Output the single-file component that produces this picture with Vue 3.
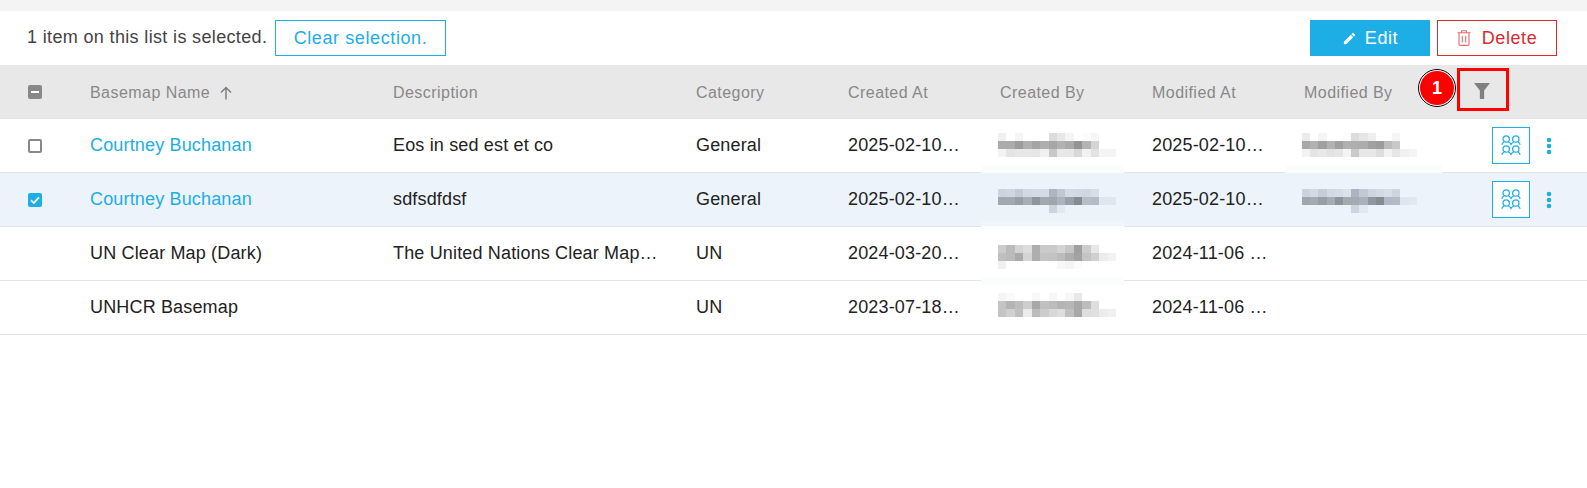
<script setup>
const W = null
const g = (s) => s.split(' ').map((v) => (v === '--' ? W : v.length === 2 ? `#${v}${v}${v}` : `#${v}`))
const cols = ['Description', 'Category', 'Created At', 'Created By', 'Modified At', 'Modified By']

const makeRects = (rows, top, size) =>
  rows.flatMap((row, ri) =>
    g(row).map((fill, ci) => ({
      x: Math.round(-2 + ci * size),
      y: top + ri * 8,
      w: Math.round(-2 + (ci + 1) * size) - Math.round(-2 + ci * size),
      fill,
    })).filter((r) => r.fill),
  )

const rows = [
  {
    name: 'Courtney Buchanan', link: true, desc: 'Eos in sed est et co', cat: 'General',
    created: '2025-02-10…', mod: '2025-02-10…', check: 'off', actions: true,
    by: makeRects([
      'f0 -- f5 -- -- -- dc e8 f5 -- fc f6 -- --',
      'ab ab 9c b0 a4 ae a6 b2 aa 94 b4 d4 -- --',
      'f3 e4 e8 e8 e6 f0 c8 e8 e8 d8 f2 e2 f4 f4',
    ], 14, 8.43),
    byPatch: [{ y: 46, h: 8, fill: '#fbfcfc' }],
    modBy: makeRects([
      'ec -- f5 -- -- fc dc e6 ee -- -- f5 -- --',
      'a8 b2 a0 b2 a0 b0 ae ac a0 9c bc c8 -- --',
      'f2 e4 e8 e2 e6 f4 ca e8 e8 de f2 e6 f0 f4',
    ], 14, 8.2),
    modPatch: [{ y: 46, h: 8, fill: '#fbfcfc' }],
  },
  {
    name: 'Courtney Buchanan', link: true, desc: 'sdfsdfdsf', cat: 'General',
    created: '2025-02-10…', mod: '2025-02-10…', check: 'on', actions: true, selected: true,
    by: makeRects([
      'cdd4df d0d6e2 c4cad6 d2d8e4 d4dae6 d4dae6 aeb4c0 c0c6d2 d4dae6 d2d8e4 d0d6e2 d8dee8 -- --',
      'a2a8b0 a4a9b0 989ea6 a8aeb6 8f959d a2a8b0 a0a6ae acb2be 9aa0a8 868c92 b6bcc8 b4bac6 e0e6f0 e0e6f0',
      '-- -- -- -- -- -- ccd2de e2e8f2 -- -- -- -- -- --',
    ], 16, 8.43),
    byPatch: [{ y: 48, h: 5, fill: '#f1f6fb' }, { y: 53, h: 3, fill: '#fbfcfc' }],
    modBy: makeRects([
      'cdd3de d2dae4 c6ccd8 d2d8e4 d6dce6 dce2ea acb4c2 c2c8d4 ced4e0 d4dae4 d8dee8 ced4e0 -- --',
      'a0a6ae a4aab2 989ea6 a6acb4 8e949c a4aab2 a4aab2 aab0bc 90969e 868c92 b2b8c4 b4bac6 dfe5ef e2e8f2',
      '-- -- -- -- -- -- cdd3df e2e8f2 -- -- -- -- -- --',
    ], 16, 8.2),
    modPatch: [],
  },
  {
    name: 'UN Clear Map (Dark)', desc: 'The United Nations Clear Map…', cat: 'UN',
    created: '2024-03-20…', mod: '2024-11-06 …',
    by: makeRects([
      'cc bb d4 dd ae ca ca d4 c6 a0 cc e8 -- --',
      'c0 bb aa d4 ae c4 c2 bc ae a2 c4 d0 ec f2',
      'f0 -- -- -- -- -- -- f8 f4 fb -- -- -- --',
    ], 18, 8.43),
    byPatch: [{ y: 50, h: 8, fill: '#fbfcfc' }],
    modBy: [], modPatch: [],
  },
  {
    name: 'UNHCR Basemap', desc: '', cat: 'UN',
    created: '2023-07-18…', mod: '2024-11-06 …',
    by: makeRects([
      'f5 fa -- -- f8 -- f7 -- f7 e8 -- -- -- --',
      'c4 b4 be ce a8 c0 bc b4 b6 a8 bc de -- --',
      'c4 d0 c0 ec bc cc d8 de c0 a8 de e0 ec f0',
    ], 12, 8.43),
    byPatch: [], modBy: [], modPatch: [],
  },
]
</script>

<template>
  <div class="page">
    <div class="toolbar">
      <span class="count">1 item on this list is selected.</span>
      <button class="clear">Clear selection.</button>
      <div class="spacer"></div>
      <button class="edit">
        <svg class="pencil" viewBox="0 0 24 24" width="15" height="15"><path fill="#fff" d="M3 17.25V21h3.75L17.81 9.94l-3.75-3.75L3 17.25zM20.71 7.04a1 1 0 0 0 0-1.41l-2.34-2.34a1 1 0 0 0-1.41 0l-1.83 1.83 3.75 3.75 1.83-1.83z" /></svg>
        Edit
      </button>
      <button class="delete">
        <svg class="trash" viewBox="0 0 14 16" width="14" height="16" fill="none" stroke="#e66a6c" stroke-width="1.1"><path d="M0.5 2.8h13M2 2.8v11.4q0 1.2 1.2 1.2h7.6q1.2 0 1.2-1.2V2.8M4.6 2.8V0.8h4.8v2M5.3 6v6.5M8.7 6v6.5" /></svg>
        Delete
      </button>
    </div>

    <div class="row head">
      <div class="c-check">
        <span class="box mixed"><svg viewBox="0 0 14 14" width="14" height="14"><path d="M3 7h8" stroke="#fff" stroke-width="2" /></svg></span>
      </div>
      <div class="cell name-head">
        Basemap Name
        <svg viewBox="0 0 14 14" width="14" height="14" fill="none" stroke="#808080" stroke-width="1.5"><path d="M7 13.5V1.5M2 6.5l5-5 5 5" /></svg>
      </div>
      <div class="cell" v-for="c in cols" :key="c">{{ c }}</div>
      <div class="filter">
        <svg viewBox="0 0 15 15" width="16" height="16"><path fill="#808080" d="M0 0h15L9.5 7v8h-4V7z" /></svg>
      </div>
      <span class="mark"></span>
      <span class="badge">1</span>
    </div>

    <div v-for="(r, i) in rows" :key="i" class="row" :class="{ sel: r.selected }">
      <div class="c-check">
        <span v-if="r.check" class="box" :class="r.check">
          <svg v-if="r.check === 'on'" viewBox="0 0 14 14" width="14" height="14" fill="none" stroke="#fff" stroke-width="1.7"><path d="M3 7.2l2.8 2.8L11 4.4" /></svg>
        </span>
      </div>
      <div class="cell" :class="{ link: r.link }">{{ r.name }}</div>
      <div class="cell">{{ r.desc }}</div>
      <div class="cell">{{ r.cat }}</div>
      <div class="cell">{{ r.created }}</div>
      <div class="blur">
        <svg width="120" height="53" shape-rendering="crispEdges">
          <rect v-for="(p, k) in r.byPatch" :key="'p' + k" x="-19" :y="p.y" width="143" :height="p.h" :fill="p.fill" />
          <rect v-for="(c, k) in r.by" :key="k" :x="c.x" :y="c.y" :width="c.w" height="8" :fill="c.fill" />
        </svg>
      </div>
      <div class="cell">{{ r.mod }}</div>
      <div class="blur">
        <svg width="120" height="53" shape-rendering="crispEdges">
          <rect v-for="(p, k) in r.modPatch" :key="'p' + k" x="-19" :y="p.y" width="157" :height="p.h" :fill="p.fill" />
          <rect v-for="(c, k) in r.modBy" :key="k" :x="c.x" :y="c.y" :width="c.w" height="8" :fill="c.fill" />
        </svg>
      </div>
      <div v-if="r.actions" class="actions">
        <button class="people">
          <svg viewBox="0 0 20 21" width="20" height="21" fill="none" stroke="#1daee5" stroke-width="1.25">
            <circle cx="5.2" cy="4" r="3.2" /><circle cx="14.8" cy="4" r="3.2" />
            <circle cx="5.2" cy="14" r="3.2" /><circle cx="14.8" cy="14" r="3.2" />
            <path d="M0.8 9.8q0.6-2 2.3-2.8M7.3 7q1.8 0.6 2.7 2.4q0.9-1.8 2.7-2.4M16.9 7q1.7 0.8 2.3 2.8" />
            <path d="M0.8 19.8q0.6-2 2.3-2.8M7.3 17q1.8 0.6 2.7 2.4q0.9-1.8 2.7-2.4M16.9 17q1.7 0.8 2.3 2.8" />
          </svg>
        </button>
        <svg class="kebab" viewBox="0 0 6 18" width="6" height="18" fill="#1daee5"><circle cx="3" cy="3" r="2.3" /><circle cx="3" cy="9" r="2.3" /><circle cx="3" cy="15" r="2.3" /></svg>
      </div>
    </div>
  </div>
</template>

<style>
body { background: #fff; }
</style>
<style scoped>
.page { width: 1587px; font-family: "Liberation Sans", Arial, sans-serif; border-top: 11px solid #f4f4f4; }
.toolbar { height: 54px; display: flex; align-items: center; padding: 0 30px 0 27px; font-size: 18px; letter-spacing: 0.6px; }
.count { color: #444; margin-right: 7px; margin-top: -2px; width: 241px; white-space: nowrap; letter-spacing: 0.35px; }
.spacer { flex: 1; }
button { font: inherit; letter-spacing: inherit; height: 36px; background: #fff; padding: 0; display: flex; align-items: center; justify-content: center; }
.clear { width: 171px; border: 1px solid #1daee5; color: #1daee5; }
.edit { width: 120px; border: 0; background: #1daee5; color: #fff; }
.pencil { margin-right: 8px; }
.delete { width: 120px; margin-left: 7px; border: 1px solid #dc2a2e; color: #dc2a2e; }
.trash { margin-right: 11px; }
.row { position: relative; height: 53px; display: grid; grid-template-columns: 90px 303px 303px 152px 152px 152px 152px 152px 1fr; align-items: center; border-bottom: 1px solid #e4e4e4; font-size: 18px; letter-spacing: 0.16px; color: #222; }
.head { background: #e8e8e8; color: #888; font-size: 16px; letter-spacing: 0.45px; }
.head .cell { padding-top: 2px; }
.sel { background: #ecf3fb; }
.c-check { padding-left: 28px; display: flex; }
.box { width: 14px; height: 14px; border: 2px solid #888; border-radius: 2px; box-sizing: border-box; display: flex; align-items: center; justify-content: center; flex: none; }
.box svg { flex: none; }
.mixed { background: #888; }
.on { background: #1daee5; border-color: #1daee5; }
.cell { white-space: nowrap; }
.name-head { display: flex; align-items: center; gap: 9px; }
.link { color: #1daee5; }
.blur { height: 53px; }
.blur svg { display: block; overflow: visible; }
.filter { display: flex; padding-left: 18px; margin-top: -2px; }
.mark { position: absolute; left: 1457px; top: 3px; width: 52px; height: 43px; box-sizing: border-box; border: 3px solid #f00; }
.badge { position: absolute; left: 1418px; top: 4px; width: 38px; height: 38px; box-sizing: border-box; border-radius: 50%; background: #f00; border: 2px solid #fff; outline: 1px solid #000; outline-offset: -1px; color: #fff; font-weight: 700; font-size: 18px; letter-spacing: 0; display: flex; align-items: center; justify-content: center; }
.actions { display: flex; align-items: center; padding-left: 36px; }
.people { width: 38px; height: 37px; border: 1px solid #1daee5; box-sizing: border-box; }
.kebab { margin-left: 16px; }
</style>
